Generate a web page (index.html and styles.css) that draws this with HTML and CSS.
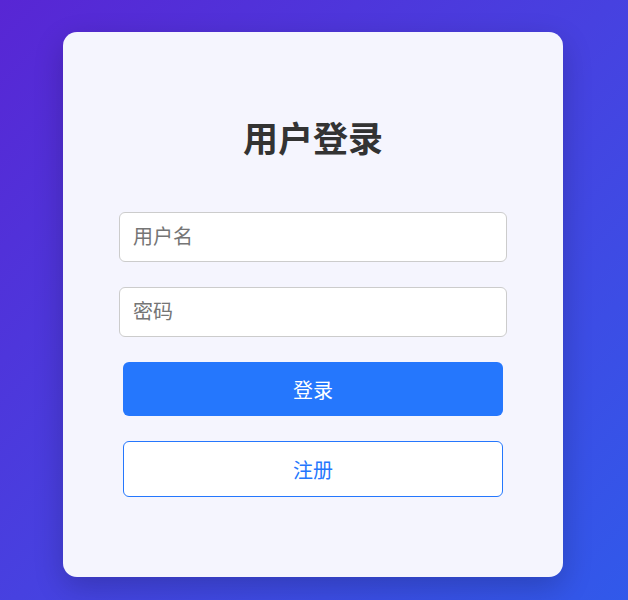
FILE: index.html
```html
<!DOCTYPE html>
<html lang="zh-CN">
<head>
    <meta charset="UTF-8">
    <meta name="viewport" content="width=device-width, initial-scale=1.0">
    <title>用户登录</title>
    <link rel="stylesheet" href="styles.css">
</head>
<body>
    <div class="login-container">
        <h2>用户登录</h2>
        <form class="login-form">
            <input type="text" class="form-input" placeholder="用户名">
            <input type="password" class="form-input" placeholder="密码">
            <button type="submit" class="btn btn-login">登录</button>
            <button type="button" class="btn btn-register">注册</button>
        </form>
    </div>
</body>
</html>
```

FILE: styles.css
```css
/* Reset and base styles */
* {
    margin: 0;
    padding: 0;
    box-sizing: border-box;
}

body {
    font-family: "Noto Sans CJK SC", "Noto Sans", sans-serif;
    background: linear-gradient(135deg, #5826d4 0%, #4741e0 50%, #3159ea 100%);
    min-height: 100vh;
    padding: 32px 2px 0 0;
    color: #333;
}

/* Card */
.login-container {
    width: 500px;
    height: 545px;
    margin: 0 auto;
    background-color: #f5f5fe;
    border-radius: 14px;
    box-shadow: 0 10px 30px rgba(0, 0, 0, 0.2);
    padding: 85px 56px 80px;
}

.login-container h2 {
    font-size: 35px;
    font-weight: bold;
    line-height: 40px;
    text-align: center;
    color: #333;
    margin-bottom: 55px;
}

/* Form */
.login-form {
    display: flex;
    flex-direction: column;
    gap: 25px;
}

.form-input {
    width: 100%;
    height: 50px;
    padding: 0 13px 4px;
    border: 1px solid #ccc;
    border-radius: 6px;
    background-color: white;
    font-family: inherit;
    font-size: 20px;
    color: #333;
    outline: none;
}

.form-input::placeholder {
    color: #757575;
}

.btn {
    margin: 0 4px;
    border-radius: 6px;
    font-family: inherit;
    font-size: 20px;
    cursor: pointer;
}

.btn-login {
    height: 54px;
    background-color: #2577fd;
    color: white;
    border: none;
}

.btn-register {
    height: 56px;
    background-color: white;
    color: #2577fd;
    border: 1px solid #2577fd;
}
```
